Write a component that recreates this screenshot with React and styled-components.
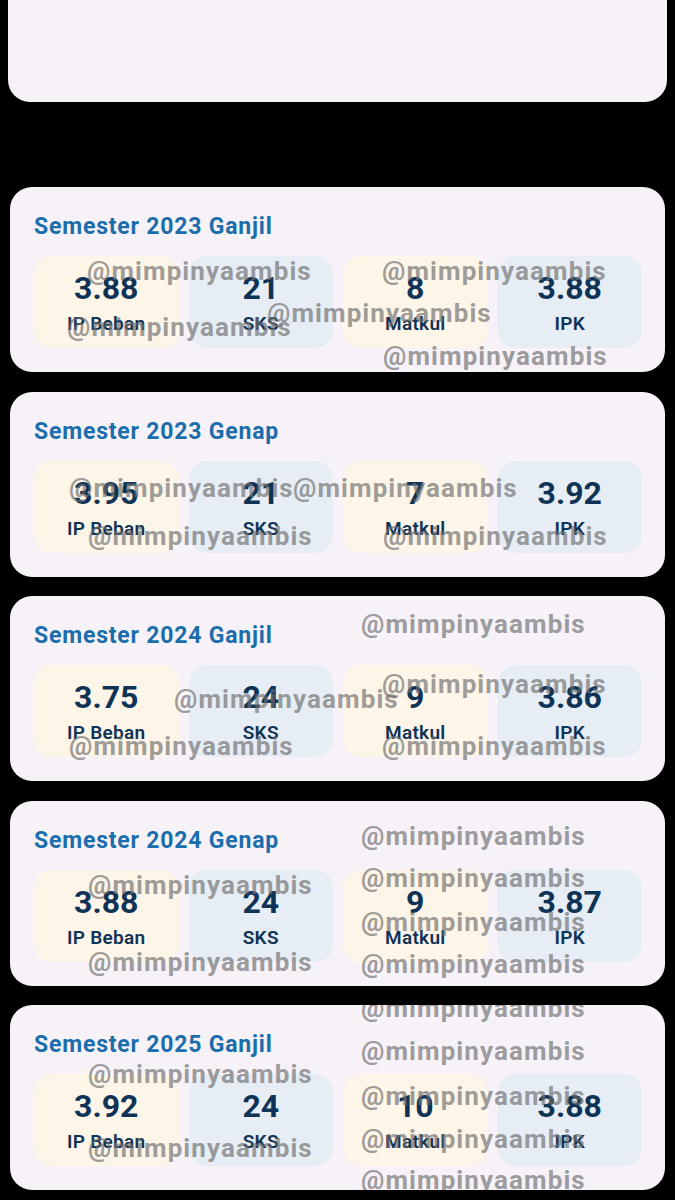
import React from 'react';
import styled, { createGlobalStyle } from 'styled-components';

const GlobalStyle = createGlobalStyle`
  html, body {
    margin: 0;
    padding: 0;
    background: #000;
  }
  body {
    font-family: Roboto, "Noto Sans", sans-serif;
  }
`;

const semesters = [
  {
    title: 'Semester 2023 Ganjil',
    stats: ['3.88', '21', '8', '3.88'],
    marks: [[77, 72], [57, 128], [257, 114], [372, 72], [373, 157]],
  },
  {
    title: 'Semester 2023 Genap',
    stats: ['3.95', '21', '7', '3.92'],
    marks: [[59, 84], [283, 84], [78, 132], [373, 132]],
  },
  {
    title: 'Semester 2024 Ganjil',
    stats: ['3.75', '24', '9', '3.86'],
    marks: [[351, 16], [372, 76], [164, 91], [59, 138], [372, 138]],
  },
  {
    title: 'Semester 2024 Genap',
    stats: ['3.88', '24', '9', '3.87'],
    marks: [[351, 23], [351, 65], [78, 72], [351, 109], [78, 149], [351, 151]],
  },
  {
    title: 'Semester 2025 Ganjil',
    stats: ['3.92', '24', '10', '3.88'],
    marks: [[351, -9], [351, 34], [78, 57], [351, 79], [351, 122], [78, 131], [351, 163]],
  },
];

const labels = ['IP Beban', 'SKS', 'Matkul', 'IPK'];

const App = () => {
  return (
    <>
      <GlobalStyle />
      <Page>
        <TopCard />
        <List>
          {semesters.map((s) => (
            <Card key={s.title}>
              <Title>{s.title}</Title>
              <Stats>
                {s.stats.map((v, i) => (
                  <StatBox key={labels[i]} $tone={i % 2 === 0 ? 'warm' : 'cool'}>
                    <Value>{v}</Value>
                    <Label>{labels[i]}</Label>
                  </StatBox>
                ))}
              </Stats>
              {s.marks.map(([x, y], i) => (
                <Watermark key={i} style={{ left: x, top: y }}>
                  @mimpinyaambis
                </Watermark>
              ))}
            </Card>
          ))}
        </List>
      </Page>
    </>
  );
};

const Page = styled.div`
  width: 675px;
  min-height: 1200px;
  background: #000;
  display: flex;
  flex-direction: column;
`;

const TopCard = styled.div`
  margin: 0 8px;
  height: 102px;
  background: #f6f2f8;
  border-radius: 0 0 22px 22px;
`;

const List = styled.div`
  display: flex;
  flex-direction: column;
  gap: 19.5px;
  padding: 85px 10px 0;
`;

const Card = styled.div`
  position: relative;
  overflow: hidden;
  height: 185px;
  box-sizing: border-box;
  padding: 27px 23px 24px 24px;
  background: #f6f2f8;
  border-radius: 22px;
  display: flex;
  flex-direction: column;
  gap: 16px;
`;

const Title = styled.h2`
  margin: 0;
  font-size: 23px;
  line-height: 26px;
  letter-spacing: 0.8px;
  font-weight: 700;
  color: #1b6dab;
`;

const Stats = styled.div`
  display: grid;
  grid-template-columns: repeat(4, 1fr);
  gap: 10px;
`;

const StatBox = styled.div`
  height: 92px;
  border-radius: 18px;
  background: ${(p) => (p.$tone === 'warm' ? '#fdf5e8' : '#e6edf4')};
  display: flex;
  flex-direction: column;
  align-items: center;
  justify-content: center;
  gap: 5px;
`;

const Value = styled.div`
  font-size: 32px;
  line-height: 38px;
  font-weight: 700;
  color: #0f3356;
`;

const Label = styled.div`
  font-size: 19px;
  line-height: 23px;
  letter-spacing: 0.3px;
  font-weight: 600;
  color: #0f3356;
`;

const Watermark = styled.span`
  position: absolute;
  font-size: 26px;
  line-height: 25px;
  letter-spacing: 1.1px;
  font-weight: 700;
  color: rgba(110, 110, 110, 0.68);
  white-space: nowrap;
  pointer-events: none;
`;

export default App;
